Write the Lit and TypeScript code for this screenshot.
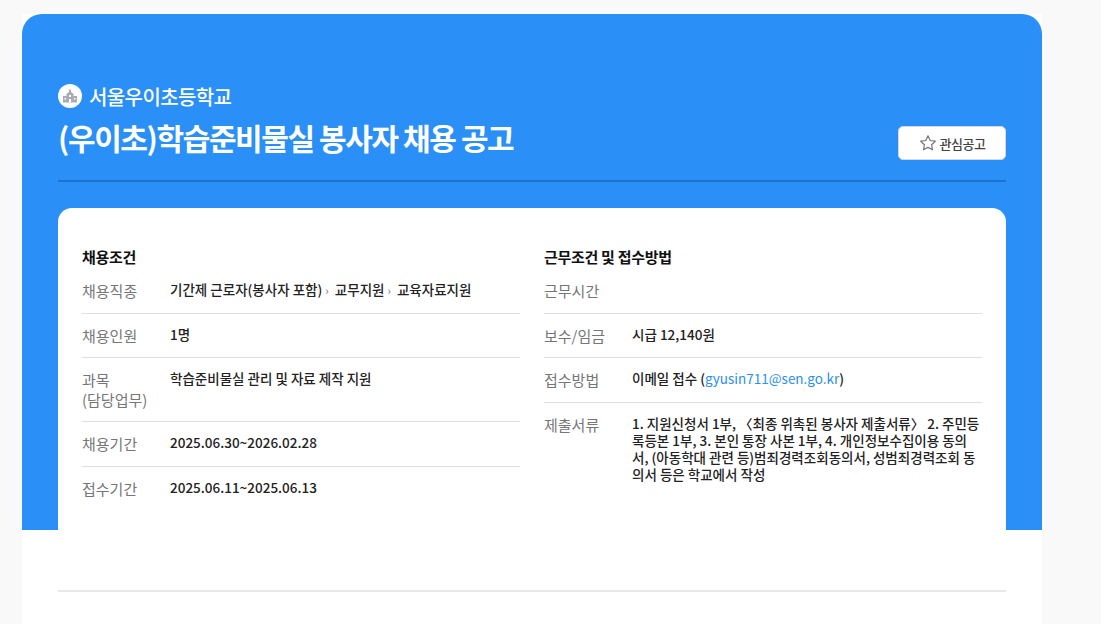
import { LitElement, html, css } from 'lit';
import { customElement } from 'lit/decorators.js';

@customElement('app-root')
export class AppRoot extends LitElement {
  static styles = css`
    :host {
      display: block;
      height: 624px;
      overflow: hidden;
      background: #f9f9f9;
      font-family: 'Noto Sans CJK KR', 'Noto Sans', sans-serif;
      color: #222;
    }
    .wrap {
      width: 1020px;
      margin-left: 22px;
      padding-top: 14px;
    }
    .panel {
      background: #fff;
      height: 610px;
    }
    .head {
      height: 516px;
      box-sizing: border-box;
      background: #2a8ff6;
      border-radius: 20px 20px 0 0;
      padding: 70px 36px 0;
    }
    .school {
      display: flex;
      align-items: center;
      gap: 7px;
      height: 24px;
      color: #fff;
      font-size: 20px;
      font-weight: 500;
      letter-spacing: -0.6px;
    }
    .logo {
      width: 24px;
      height: 24px;
      border-radius: 50%;
      background: #fff;
      display: flex;
      align-items: center;
      justify-content: center;
    }
    .title-row {
      display: flex;
      justify-content: space-between;
      align-items: flex-end;
      height: 72px;
      padding-bottom: 20px;
      margin-bottom: 26px;
      box-sizing: content-box;
      height: 52px;
      border-bottom: 2px solid #1a73d1;
    }
    h1 {
      margin: 0;
      align-self: flex-start;
      padding-top: 9px;
      color: #fff;
      font-size: 30px;
      line-height: 40px;
      font-weight: 700;
      letter-spacing: -1.4px;
    }
    .fav {
      width: 108px;
      height: 34px;
      box-sizing: border-box;
      margin-bottom: 0;
      background: #fff;
      border: 1px solid #d8d8d8;
      border-radius: 5px;
      display: flex;
      align-items: center;
      justify-content: center;
      gap: 3px;
      font-family: inherit;
      font-size: 13px;
      font-weight: 500;
      letter-spacing: -0.5px;
      color: #444;
      padding: 0;
    }
    .card {
      background: #fff;
      border-radius: 14px 14px 0 0;
      height: 323px;
      box-sizing: border-box;
      padding: 37px 24px 0;
      display: grid;
      grid-template-columns: 438px 438px;
      gap: 24px;
    }
    h2 {
      margin: 0 0 3px;
      font-size: 15px;
      line-height: 24px;
      font-weight: 700;
      letter-spacing: -0.3px;
      color: #111;
    }
    .row {
      display: flex;
      padding: 12px 0;
      font-size: 15px;
      line-height: 19.5px;
      border-top: 1px solid #dedede;
    }
    .row.first {
      border-top: 0;
      padding-top: 9px;
    }
    .label {
      flex: 0 0 88px;
      color: #767676;
    }
    .value {
      flex: 1;
      font-size: 13.5px;
      font-weight: 500;
      line-height: 17px;
      color: #222;
    }
    .sep {
      color: #888;
      font-size: 11px;
      margin: 0 3px;
    }
    a {
      color: #2a8ff6;
      text-decoration: none;
      font-weight: 400;
    }
    .rule {
      margin: 60px 36px 0;
      height: 2px;
      background: #e8e8e8;
    }
  `;

  render() {
    return html`
      <div class="wrap">
        <div class="panel">
          <div class="head">
            <div class="school">
              <span class="logo">
                <svg width="18" height="18" viewBox="0 0 18 18" fill="#a9adb3">
                  <path d="M9 2l1 1.2V5l2.6 2v2H16v6.5H2V9h3.4V7L8 5V3.2z" />
                  <path fill="#fff" d="M8 8h2v2H8zM3.5 11h1.5v1.6H3.5zM13 11h1.5v1.6H13zM8 12h2v3.5H8z" />
                </svg>
              </span>
              서울우이초등학교
            </div>
            <div class="title-row">
              <h1>(우이초)학습준비물실 봉사자 채용 공고</h1>
              <button class="fav">
                <svg width="18" height="18" viewBox="0 0 18 18" fill="none" stroke="#777" stroke-width="1.2" stroke-linejoin="round">
                  <path d="M9 1.8l2.2 4.7 5.1.7-3.7 3.5.9 5.1L9 13.4l-4.5 2.4.9-5.1L1.7 7.2l5.1-.7z" />
                </svg>
                관심공고
              </button>
            </div>
            <div class="card">
              <section>
                <h2>채용조건</h2>
                <div class="row first">
                  <div class="label">채용직종</div>
                  <div class="value">기간제 근로자(봉사자 포함)<span class="sep">›</span> 교무지원<span class="sep">›</span> 교육자료지원</div>
                </div>
                <div class="row"><div class="label">채용인원</div><div class="value">1명</div></div>
                <div class="row"><div class="label">과목<br />(담당업무)</div><div class="value">학습준비물실 관리 및 자료 제작 지원</div></div>
                <div class="row"><div class="label">채용기간</div><div class="value">2025.06.30~2026.02.28</div></div>
                <div class="row"><div class="label">접수기간</div><div class="value">2025.06.11~2025.06.13</div></div>
              </section>
              <section>
                <h2>근무조건 및 접수방법</h2>
                <div class="row first"><div class="label">근무시간</div><div class="value"></div></div>
                <div class="row"><div class="label">보수/임금</div><div class="value">시급 12,140원</div></div>
                <div class="row"><div class="label">접수방법</div><div class="value">이메일 접수 (<a href="#">gyusin711@sen.go.kr</a>)</div></div>
                <div class="row">
                  <div class="label">제출서류</div>
                  <div class="value">1. 지원신청서 1부, 〈최종 위촉된 봉사자 제출서류〉 2. 주민등록등본 1부, 3. 본인 통장 사본 1부, 4. 개인정보수집이용 동의서, (아동학대 관련 등)범죄경력조회동의서, 성범죄경력조회 동의서 등은 학교에서 작성</div>
                </div>
              </section>
            </div>
          </div>
          <div class="rule"></div>
        </div>
      </div>
    `;
  }
}
